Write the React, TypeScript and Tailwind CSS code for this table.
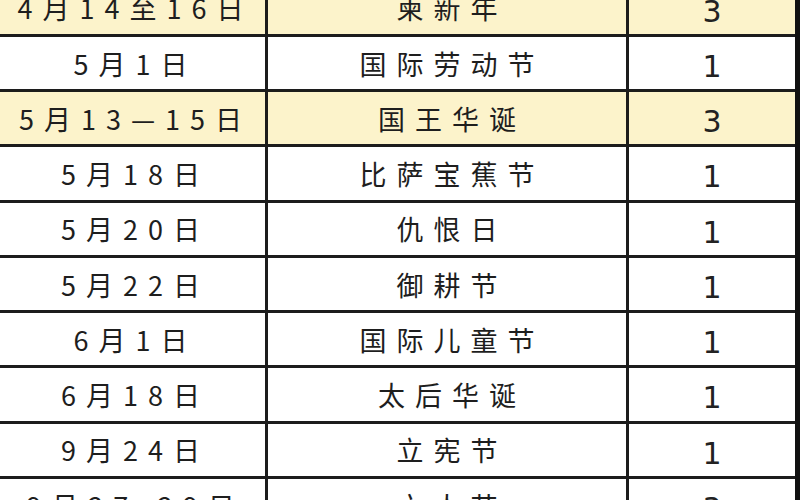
import React from "react";

const rows: { date: string; name: string; days: string; yellow?: boolean }[] = [
  { date: "4月14至16日", name: "柬新年", days: "3", yellow: true },
  { date: "5月1日", name: "国际劳动节", days: "1" },
  { date: "5月13—15日", name: "国王华诞", days: "3", yellow: true },
  { date: "5月18日", name: "比萨宝蕉节", days: "1" },
  { date: "5月20日", name: "仇恨日", days: "1" },
  { date: "5月22日", name: "御耕节", days: "1" },
  { date: "6月1日", name: "国际儿童节", days: "1" },
  { date: "6月18日", name: "太后华诞", days: "1" },
  { date: "9月24日", name: "立宪节", days: "1" },
  { date: "9月27-29日", name: "亡人节", days: "3" },
];

export default function App() {
  return (
    <div className="w-[800px] h-[500px] overflow-hidden bg-white">
      <div className="mt-[-18.5px] flex flex-col border-r-[5px] border-[#111]">
        {rows.map((r, i) => (
          <div
            key={i}
            className={`grid grid-cols-[268px_361px_1fr] h-[55.25px] border-b-[3px] border-[#1c1c1c] ${
              r.yellow ? "bg-[#fcf3cb]" : "bg-white"
            }`}
          >
            <div
              className="flex items-center justify-center border-r-[3px] border-[#1c1c1c] pl-[6px] pt-[2px] text-[27px] tracking-[10px] text-[#1e1e1e] whitespace-nowrap"
              style={{ fontFamily: '"Noto Sans CJK SC", sans-serif' }}
            >
              {r.date}
            </div>
            <div
              className="flex items-center justify-center border-r-[3px] border-[#1c1c1c] pl-[10px] pt-[2px] text-[27px] tracking-[10px] text-[#1e1e1e] whitespace-nowrap"
              style={{ fontFamily: '"Noto Sans CJK SC", sans-serif' }}
            >
              {r.name}
            </div>
            <div
              className="flex items-center justify-center pt-[7px] text-[30px] text-[#222]"
              style={{ fontFamily: '"DejaVu Sans", sans-serif' }}
            >
              {r.days}
            </div>
          </div>
        ))}
      </div>
    </div>
  );
}
